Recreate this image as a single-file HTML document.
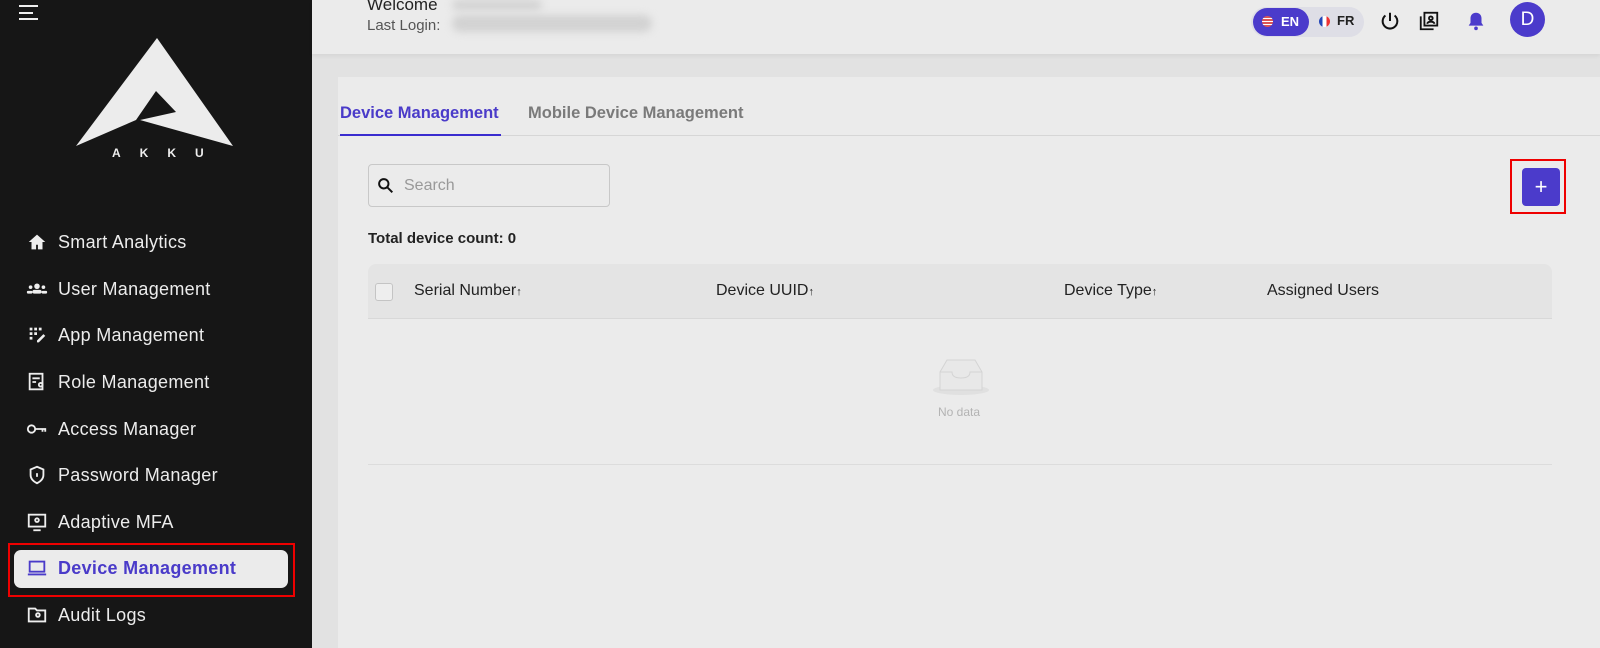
<!DOCTYPE html>
<html><head><meta charset="utf-8"><style>
*{box-sizing:border-box;margin:0;padding:0}
body{width:1600px;height:648px;overflow:hidden;background:#e2e2e2;font-family:"Liberation Sans",sans-serif;position:relative}
#sb{position:absolute;left:0;top:0;width:312px;height:648px;background:#161616;color:#eee}
.nav{position:absolute;left:26px;font-size:18px;letter-spacing:0.3px;color:#ececec;display:flex;align-items:center}
.nav svg{width:22px;height:22px;margin-right:10px}
#hdr{position:absolute;left:312px;top:0;width:1288px;height:54px;background:#ebebeb;box-shadow:0 2px 4px rgba(0,0,0,.06)}
#panel{position:absolute;left:338px;top:77px;width:1262px;height:571px;background:#ebebeb}
.blur{position:absolute;background:#d2d2d2;border-radius:10px;filter:blur(4px)}
</style></head><body>
<div id="sb">
 <div style="position:absolute;left:19px;top:5px;width:19px;height:2px;background:#eee"></div>
 <div style="position:absolute;left:19px;top:12px;width:14px;height:2px;background:#eee"></div>
 <div style="position:absolute;left:19px;top:18px;width:19px;height:2px;background:#eee"></div>
 <svg style="position:absolute;left:76px;top:36px" width="160" height="112" viewBox="0 0 160 112">
  <polygon points="81,2 0,110 60,84 80,55 100,76 64,84 157,110" fill="#ececec"/>
 </svg>
 <div style="position:absolute;left:112px;top:146px;font-size:12px;font-weight:bold;letter-spacing:19px;color:#eee">AKKU</div>
 <div class="nav" style="top:231px"><svg viewBox="0 0 24 24"><path d="M12 4L3 12h3v8h5v-5h2v5h5v-8h3z" fill="#eee"/></svg>Smart Analytics</div>
 <div class="nav" style="top:278px"><svg viewBox="0 0 24 24" fill="#eee"><circle cx="12" cy="9" r="3"/><circle cx="5" cy="10" r="2"/><circle cx="19" cy="10" r="2"/><rect x="7" y="13" width="10" height="4" rx="2"/><rect x="1" y="14" width="6" height="3" rx="1"/><rect x="17" y="14" width="6" height="3" rx="1"/></svg>User Management</div>
 <div class="nav" style="top:324px"><svg viewBox="0 0 24 24" fill="#eee"><rect x="4" y="4" width="3" height="3"/><rect x="9" y="4" width="3" height="3"/><rect x="14" y="4" width="3" height="3"/><rect x="4" y="9" width="3" height="3"/><rect x="9" y="9" width="3" height="3"/><rect x="4" y="14" width="3" height="3"/><path d="M12 18l7-7 2 2-7 7h-2z"/></svg>App Management</div>
 <div class="nav" style="top:371px"><svg viewBox="0 0 24 24" fill="none" stroke="#eee" stroke-width="2"><rect x="4" y="3" width="14" height="17"/><path d="M7 8h8M7 12h4"/><circle cx="16" cy="15" r="2"/></svg>Role Management</div>
 <div class="nav" style="top:418px"><svg viewBox="0 0 24 24" fill="none" stroke="#eee" stroke-width="2"><circle cx="6" cy="12" r="4"/><path d="M10 12h12M18 12v3M21 12v3"/></svg>Access Manager</div>
 <div class="nav" style="top:464px"><svg viewBox="0 0 24 24" fill="none" stroke="#eee" stroke-width="2"><path d="M12 3l7 3v6c0 4-3 7-7 9-4-2-7-5-7-9V6z"/><path d="M12 10v4"/></svg>Password Manager</div>
 <div class="nav" style="top:511px"><svg viewBox="0 0 24 24" fill="none" stroke="#eee" stroke-width="2"><rect x="3" y="4" width="18" height="13"/><path d="M8 21h8"/><circle cx="12" cy="10" r="2"/></svg>Adaptive MFA</div>
 <div style="position:absolute;left:8px;top:543px;width:287px;height:54px;border:2px solid #e00"></div>
 <div style="position:absolute;left:14px;top:550px;width:274px;height:38px;background:#ebebeb;border-radius:7px"></div>
 <div class="nav" style="top:557px;color:#4a3bc9;font-weight:bold"><svg viewBox="0 0 24 24" fill="none" stroke="#4a3bc9" stroke-width="2"><rect x="4" y="5" width="16" height="11"/><path d="M2 19h20"/></svg>Device Management</div>
 <div class="nav" style="top:604px"><svg viewBox="0 0 24 24" fill="none" stroke="#eee" stroke-width="2"><path d="M3 5h7l2 2h9v12H3z"/><circle cx="13" cy="12" r="2"/></svg>Audit Logs</div>
</div>
<div id="hdr">
 <div style="position:absolute;left:55px;top:-5px;font-size:17px;color:#222">Welcome</div>
 <div style="position:absolute;left:55px;top:17px;font-size:15px;color:#555">Last Login:</div>
 <div class="blur" style="left:140px;top:0;width:90px;height:10px"></div>
 <div class="blur" style="left:140px;top:15px;width:200px;height:17px"></div>
 <div style="position:absolute;left:939px;top:7px;width:113px;height:30px;border-radius:15px;background:#dedee6"></div>
 <div style="position:absolute;left:941px;top:8px;width:56px;height:28px;border-radius:14px;background:#4b3bcb;color:#fff;font-size:13px;font-weight:bold;line-height:28px;padding-left:28px">EN</div>
 <div style="position:absolute;left:950px;top:16px;width:11px;height:11px;border-radius:50%;background:repeating-linear-gradient(#d55 0 2px,#fff 2px 3px)"></div>
 <div style="position:absolute;left:1007px;top:16px;width:11px;height:11px;border-radius:50%;background:linear-gradient(90deg,#2346b8 33%,#fff 33% 66%,#e33 66%)"></div>
 <div style="position:absolute;left:1025px;top:13px;font-size:13px;font-weight:bold;color:#222">FR</div>
 <svg style="position:absolute;left:1067px;top:10px" width="22" height="22" viewBox="0 0 24 24" fill="none" stroke="#111" stroke-width="2.2"><path d="M12 3v9"/><path d="M7 6a8 8 0 1 0 10 0"/></svg>
 <svg style="position:absolute;left:1106px;top:10px" width="22" height="22" viewBox="0 0 24 24" fill="none" stroke="#111" stroke-width="2"><rect x="7" y="3" width="14" height="14"/><path d="M3 7v14h14"/><circle cx="14" cy="9" r="2"/><path d="M10 15c1-3 7-3 8 0"/></svg>
 <svg style="position:absolute;left:1153px;top:10px" width="22" height="22" viewBox="0 0 24 24" fill="#4b3bcb"><path d="M12 3c-4 0-6 3-6 6v5l-2 3h16l-2-3V9c0-3-2-6-6-6z"/><circle cx="12" cy="20" r="2"/></svg>
 <div style="position:absolute;left:1198px;top:2px;width:35px;height:35px;border-radius:50%;background:#4b3bcb;color:#fff;font-size:19px;text-align:center;line-height:35px">D</div>
</div>
<div id="panel">
 <div style="position:absolute;left:2px;top:27px;font-size:16.5px;font-weight:bold;color:#4a3bc9">Device Management</div>
 <div style="position:absolute;left:190px;top:27px;font-size:16.5px;font-weight:bold;color:#7a7a7a">Mobile Device Management</div>
 <div style="position:absolute;left:0;top:58px;width:1262px;height:1px;background:#d6d6d6"></div>
 <div style="position:absolute;left:2px;top:57px;width:161px;height:2px;background:#3a2ccf"></div>
 <div style="position:absolute;left:30px;top:87px;width:242px;height:43px;border:1px solid #c8c8c8;border-radius:4px"></div>
 <svg style="position:absolute;left:39px;top:100px" width="17" height="17" viewBox="0 0 20 20" fill="none" stroke="#111" stroke-width="2.3"><circle cx="8" cy="8" r="5.5"/><path d="M12 12l6 6"/></svg>
 <div style="position:absolute;left:66px;top:100px;font-size:16px;color:#999">Search</div>
 <div style="position:absolute;left:1172px;top:82px;width:56px;height:55px;border:2px solid #e00"></div>
 <div style="position:absolute;left:1184px;top:91px;width:38px;height:38px;background:#4b3bcb;border-radius:4px;color:#fff;font-size:22px;text-align:center;line-height:37px">+</div>
 <div style="position:absolute;left:30px;top:153px;font-size:15px;font-weight:bold;color:#222">Total device count: 0</div>
 <div style="position:absolute;left:30px;top:187px;width:1184px;height:55px;background:#e4e4e4;border-radius:8px 8px 0 0;border-bottom:1px solid #d8d8d8"></div>
 <div style="position:absolute;left:37px;top:206px;width:18px;height:18px;border:1px solid #c4c4c4;border-radius:3px;background:#eee"></div>
 <div style="position:absolute;left:76px;top:205px;font-size:16px;color:#222">Serial Number<span style="font-size:11px">↑</span></div>
 <div style="position:absolute;left:378px;top:205px;font-size:16px;color:#222">Device UUID<span style="font-size:11px">↑</span></div>
 <div style="position:absolute;left:726px;top:205px;font-size:16px;color:#222">Device Type<span style="font-size:11px">↑</span></div>
 <div style="position:absolute;left:929px;top:205px;font-size:16px;color:#222">Assigned Users</div>
 <svg style="position:absolute;left:594px;top:281px" width="58" height="38" viewBox="0 0 58 38"><ellipse cx="29" cy="32" rx="28" ry="5" fill="#e0e0e0"/><path d="M8 14l7-12h28l7 12v18H8z" fill="#e8e8e8" stroke="#d4d4d4"/><path d="M8 14h12q0 6 9 6t9-6h12" fill="none" stroke="#d4d4d4"/></svg>
 <div style="position:absolute;left:600px;top:328px;font-size:12px;color:#b3b3b3">No data</div>
 <div style="position:absolute;left:30px;top:387px;width:1184px;height:1px;background:#dcdcdc"></div>
</div>
</body></html>
